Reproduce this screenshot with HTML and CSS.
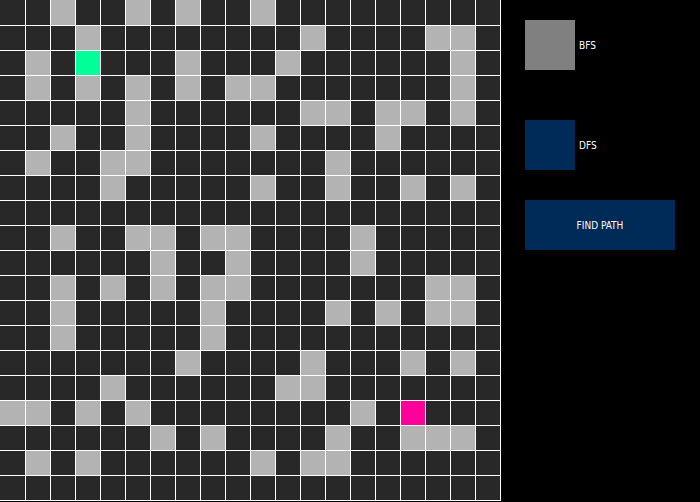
FILE: index.html
```html
<!DOCTYPE html>
<html lang="en">
<head>
<meta charset="UTF-8" />
<meta name="viewport" content="width=device-width, initial-scale=1" />
<title>Path Finder</title>
<link rel="stylesheet" href="styles.css">
</head>
<body>

<div id="board" class="board"></div>

<div class="panel">
  <div class="option option-bfs">
    <div class="swatch swatch-bfs"></div>
    <span class="label">BFS</span>
  </div>
  <div class="option option-dfs">
    <div class="swatch swatch-dfs"></div>
    <span class="label">DFS</span>
  </div>
  <button class="find-btn">FIND PATH</button>
</div>

<script>
// . = empty, W = wall, S = start, E = end
const layout = [
  "..W..W.W..W.........",
  "...W........W....WW.",
  ".W.S...W...W......W.",
  ".W.W.W.W.WW.......W.",
  ".....W......WW.WW.W.",
  "..W..W....W....W....",
  ".W..WW.......W......",
  "....W.....W..W..W.W.",
  "....................",
  "..W..WW.WW....W.....",
  "......W..W....W.....",
  "..W.W.W.WW.......WW.",
  "..W.....W....W.W.WW.",
  "..W.....W...........",
  ".......W....W...W.W.",
  "....W......WW.......",
  "WW.W.W........W.E...",
  "......W.W....W..WWW.",
  ".W.W......W.WW......",
  "...................."
];

const board = document.getElementById('board');
layout.forEach(row => {
  for (const ch of row) {
    const cell = document.createElement('div');
    cell.className = 'cell';
    if (ch === 'W') cell.classList.add('wall');
    if (ch === 'S') cell.classList.add('start');
    if (ch === 'E') cell.classList.add('end');
    board.appendChild(cell);
  }
});
</script>

</body>
</html>
```

FILE: styles.css
```css
body {
  margin: 0;
  background: #000;
  display: flex;
  align-items: flex-start;
}
.board {
  display: grid;
  grid-template-columns: 25px repeat(19, 24px);
  grid-template-rows: 25px repeat(19, 24px);
  gap: 1px;
  padding: 0 1px 1px 0;
  background: #fff;
}
.cell {
  background: #282828;
}
.cell.wall {
  background: #b3b3b3;
}
.cell.start {
  background: #00ff99;
}
.cell.end {
  background: #ff0099;
}
.panel {
  display: flex;
  flex-direction: column;
  padding: 20px 0 0 24px;
}
.option {
  display: flex;
  align-items: center;
  gap: 4px;
}
.option-dfs {
  margin-top: 50px;
}
.swatch {
  width: 50px;
  height: 50px;
}
.swatch-bfs {
  background: #808080;
}
.swatch-dfs {
  background: #002b58;
}
.label, .find-btn {
  color: #fff;
  font-size: 10px;
  font-family: "Liberation Sans Narrow", "DejaVu Sans Condensed", sans-serif;
  font-stretch: condensed;
}
.find-btn {
  margin-top: 30px;
  width: 150px;
  height: 50px;
  border: none;
  background: #002b58;
  padding: 0;
}
```
